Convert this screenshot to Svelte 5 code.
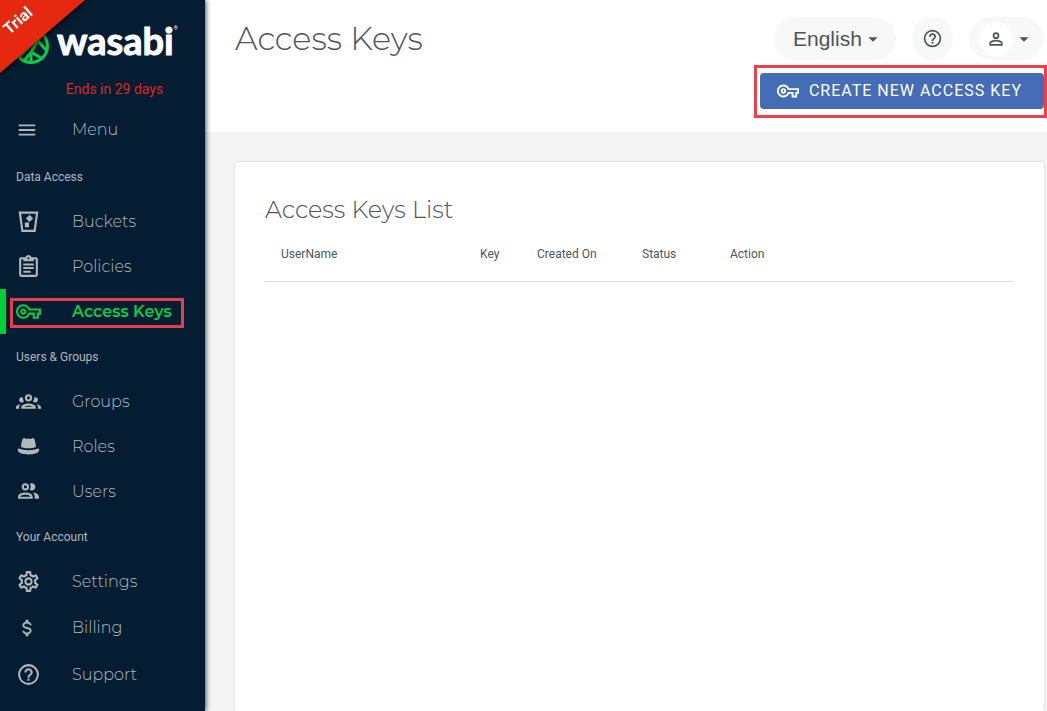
<script>
  const icons = {
    menu: "M3,6H21V8H3V6M3,11H21V13H3V11M3,16H21V18H3V16Z",
    bucket:
      "M2.5,2.5H21.5L18.8,22H5.2L2.5,2.5M4.9,4.5L7,20H17L19.1,4.5H4.9M13,5.5L16.5,9L13,12.5L9.5,9L13,5.5M8.5,13H12.5V17.5H8.5V13Z",
    clipboard:
      "M19,3H14.82C14.4,1.84 13.3,1 12,1C10.7,1 9.6,1.84 9.18,3H5A2,2 0 0,0 3,5V20A2,2 0 0,0 5,22H19A2,2 0 0,0 21,20V5A2,2 0 0,0 19,3M12,3A1,1 0 0,1 13,4A1,1 0 0,1 12,5A1,1 0 0,1 11,4A1,1 0 0,1 12,3M7,7H17V5H19V20H5V5H7V7M7,9H17V11H7V9M7,12.5H17V14.5H7V12.5M7,16H14V18H7V16Z",
    key: "M22 19H16V15H13.32C12.18 17.42 9.72 19 7 19C3.14 19 0 15.86 0 12S3.14 5 7 5C9.72 5 12.17 6.58 13.32 9H24V15H22V19M18 17H20V13H22V11H11.94L11.71 10.33C11 8.34 9.11 7 7 7C4.24 7 2 9.24 2 12S4.24 17 7 17C9.11 17 11 15.66 11.71 13.67L11.94 13H18V17M7 15C5.35 15 4 13.65 4 12S5.35 9 7 9 10 10.35 10 12 8.65 15 7 15M7 11C6.45 11 6 11.45 6 12S6.45 13 7 13 8 12.55 8 12 7.55 11 7 11Z",
    groups:
      "M12,5A3.5,3.5 0 0,0 8.5,8.5A3.5,3.5 0 0,0 12,12A3.5,3.5 0 0,0 15.5,8.5A3.5,3.5 0 0,0 12,5M12,7A1.5,1.5 0 0,1 13.5,8.5A1.5,1.5 0 0,1 12,10A1.5,1.5 0 0,1 10.5,8.5A1.5,1.5 0 0,1 12,7M5.5,8A2.5,2.5 0 0,0 3,10.5C3,11.44 3.53,12.25 4.29,12.68C4.65,12.88 5.06,13 5.5,13C5.94,13 6.35,12.88 6.71,12.68C7.08,12.47 7.39,12.17 7.62,11.81C6.89,10.86 6.5,9.7 6.5,8.5C6.5,8.41 6.5,8.31 6.5,8.22C6.2,8.08 5.86,8 5.5,8M18.5,8C18.14,8 17.8,8.08 17.5,8.22C17.5,8.31 17.5,8.41 17.5,8.5C17.5,9.7 17.11,10.86 16.38,11.81C16.5,12 16.63,12.15 16.78,12.3C16.94,12.45 17.1,12.58 17.29,12.68C17.65,12.88 18.06,13 18.5,13C18.94,13 19.35,12.88 19.71,12.68C20.47,12.25 21,11.44 21,10.5A2.5,2.5 0 0,0 18.5,8M12,14C9.66,14 5,15.17 5,17.5V19H19V17.5C19,15.17 14.34,14 12,14M4.71,14.55C2.78,14.78 0,15.76 0,17.5V19H3V17.07C3,16.06 3.69,15.22 4.71,14.55M19.29,14.55C20.31,15.22 21,16.06 21,17.07V19H24V17.5C24,15.76 21.22,14.78 19.29,14.55M12,16C13.53,16 15.24,16.5 16.23,17H7.77C8.76,16.5 10.47,16 12,16Z",
    hat: "M7.2,4C8.6,3.4 9.2,4.8 10,4.8C10.8,4.8 11.2,4.4 12,4.4C12.8,4.4 13.2,4.8 14,4.8C14.8,4.8 15.4,3.4 16.8,4C18.2,4.6 18.8,8.6 19.2,12.4C15.5,14 8.5,14 4.8,12.4C5.2,8.6 5.8,4.6 7.2,4M2.8,14C8,16.2 16,16.2 21.2,14C22.4,14 22.5,15.4 22,16.4C21,18.8 17,19.6 12,19.6C7,19.6 3,18.8 2,16.4C1.5,15.4 1.6,14 2.8,14Z",
    users:
      "M13.07 10.41A5 5 0 0 0 13.07 4.59A3.39 3.39 0 0 1 15 4A3.5 3.5 0 0 1 15 11A3.39 3.39 0 0 1 13.07 10.41M5.5 7.5A3.5 3.5 0 1 1 9 11A3.5 3.5 0 0 1 5.5 7.5M7.5 7.5A1.5 1.5 0 1 0 9 6A1.5 1.5 0 0 0 7.5 7.5M16 17V19H2V17S2 13 9 13 16 17 16 17M14 17C13.86 16.22 12.67 15 9 15S4.07 16.31 4 17M15.95 13A5.32 5.32 0 0 1 18 17V19H22V17S22 13.37 15.94 13Z",
    cog: "M12,8A4,4 0 0,1 16,12A4,4 0 0,1 12,16A4,4 0 0,1 8,12A4,4 0 0,1 12,8M12,10A2,2 0 0,0 10,12A2,2 0 0,0 12,14A2,2 0 0,0 14,12A2,2 0 0,0 12,10M10,22C9.75,22 9.54,21.82 9.5,21.58L9.13,18.93C8.5,18.68 7.96,18.34 7.44,17.94L4.95,18.95C4.73,19.03 4.46,18.95 4.34,18.73L2.34,15.27C2.21,15.05 2.27,14.78 2.46,14.63L4.57,12.97L4.5,12L4.57,11L2.46,9.37C2.27,9.22 2.21,8.95 2.34,8.73L4.34,5.27C4.46,5.05 4.73,4.96 4.95,5.05L7.44,6.05C7.96,5.66 8.5,5.32 9.13,5.07L9.5,2.42C9.54,2.18 9.75,2 10,2H14C14.25,2 14.46,2.18 14.5,2.42L14.87,5.07C15.5,5.32 16.04,5.66 16.56,6.05L19.05,5.05C19.27,4.96 19.54,5.05 19.66,5.27L21.66,8.73C21.79,8.95 21.73,9.22 21.54,9.37L19.43,11L19.5,12L19.43,13L21.54,14.63C21.73,14.78 21.79,15.05 21.66,15.27L19.66,18.73C19.54,18.95 19.27,19.04 19.05,18.95L16.56,17.95C16.04,18.34 15.5,18.68 14.87,18.93L14.5,21.58C14.46,21.82 14.25,22 14,22H10M11.25,4L10.88,6.61C9.68,6.86 8.62,7.5 7.85,8.39L5.44,7.35L4.69,8.65L6.8,10.2C6.4,11.37 6.4,12.64 6.8,13.8L4.68,15.36L5.43,16.66L7.86,15.62C8.63,16.5 9.68,17.14 10.87,17.38L11.24,20H12.76L13.13,17.39C14.32,17.14 15.37,16.5 16.14,15.62L18.57,16.66L19.32,15.36L17.2,13.81C17.6,12.64 17.6,11.37 17.2,10.2L19.31,8.65L18.56,7.35L16.15,8.39C15.38,7.5 14.32,6.86 13.12,6.62L12.75,4H11.25Z",
    dollar:
      "M7,15H9C9,16.08 10.37,17 12,17C13.63,17 15,16.08 15,15C15,13.9 13.96,13.5 11.76,12.97C9.64,12.44 7,11.78 7,9C7,7.21 8.47,5.69 10.5,5.18V3H13.5V5.18C15.53,5.69 17,7.21 17,9H15C15,7.92 13.63,7 12,7C10.37,7 9,7.92 9,9C9,10.1 10.04,10.5 12.24,11.03C14.36,11.56 17,12.22 17,15C17,16.79 15.53,18.31 13.5,18.82V21H10.5V18.82C8.47,18.31 7,16.79 7,15Z",
    help: "M11,18H13V16H11V18M12,2A10,10 0 0,0 2,12A10,10 0 0,0 12,22A10,10 0 0,0 22,12A10,10 0 0,0 12,2M12,20C7.59,20 4,16.41 4,12C4,7.59 7.59,4 12,4C16.41,4 20,7.59 20,12C20,16.41 16.41,20 12,20M12,6A4,4 0 0,0 8,10H10A2,2 0 0,1 12,8A2,2 0 0,1 14,10C14,12 11,11.75 11,15H13C13,12.75 16,12.5 16,10A4,4 0 0,0 12,6Z",
    account:
      "M12,4A4,4 0 0,1 16,8A4,4 0 0,1 12,12A4,4 0 0,1 8,8A4,4 0 0,1 12,4M12,6A2,2 0 0,0 10,8A2,2 0 0,0 12,10A2,2 0 0,0 14,8A2,2 0 0,0 12,6M12,13C14.67,13 20,14.33 20,17V20H4V17C4,14.33 9.33,13 12,13M12,14.9C9.03,14.9 5.9,16.36 5.9,17V18.1H18.1V17C18.1,16.36 14.97,14.9 12,14.9Z",
    caret: "M7,10L12,15L17,10H7Z",
  };

  const sections = [
    {
      title: "Data Access",
      items: [
        { label: "Buckets", icon: "bucket" },
        { label: "Policies", icon: "clipboard" },
        { label: "Access Keys", icon: "key", active: true },
      ],
    },
    {
      title: "Users & Groups",
      items: [
        { label: "Groups", icon: "groups" },
        { label: "Roles", icon: "hat" },
        { label: "Users", icon: "users" },
      ],
    },
    {
      title: "Your Account",
      items: [
        { label: "Settings", icon: "cog" },
        { label: "Billing", icon: "dollar", small: true, tall: true },
        { label: "Support", icon: "help", tall: true },
      ],
    },
  ];

  const columns = ["UserName", "Key", "Created On", "Status", "Action"];

  let language = "English";
</script>

{#snippet icon(name, size)}
  <svg class="icon" width={size} height={size} viewBox="0 0 24 24" aria-hidden="true">
    <path d={icons[name]} fill="currentColor" fill-rule="evenodd" />
  </svg>
{/snippet}

<div class="layout">
  <aside class="sidebar">
    <div class="brand">
      <svg class="mark" width="38" height="38" viewBox="0 0 38 38" aria-hidden="true">
        <g fill="none" stroke="#0fc944" stroke-width="3">
          <circle cx="19" cy="19" r="16.5" />
          <path d="M7 30L30 7M12 34L19 25L29 31M19 25L30 7M26 14L35 24M19 25V35" />
        </g>
      </svg>
      <span class="wordmark">wasabi</span><span class="reg">®</span>
    </div>
    <div class="ribbon"><span>Trial</span></div>
    <p class="ends">Ends in 29 days</p>

    <button class="row menu" type="button">
      <span class="slot">{@render icon("menu", 22)}</span>
      <span>Menu</span>
    </button>

    <nav>
      {#each sections as section}
        <h2>{section.title}</h2>
        {#each section.items as item}
          <a href="#{item.icon}" class="row" class:active={item.active} class:tall={item.tall}>
            <span class="slot">{@render icon(item.icon, item.small ? 22 : 25)}</span>
            <span>{item.label}</span>
          </a>
        {/each}
      {/each}
    </nav>
  </aside>

  <main>
    <header>
      <div class="top">
        <h1>Access Keys</h1>
        <div class="tools">
          <div class="pill language">
            <select aria-label="Language" bind:value={language}>
              <option>English</option>
            </select>
            {@render icon("caret", 22)}
          </div>
          <button class="pill help" type="button" aria-label="Help">
            {@render icon("help", 21)}
          </button>
          <button class="pill account" type="button" aria-label="Account">
            <span class="avatar">{@render icon("account", 20)}</span>
            {@render icon("caret", 22)}
          </button>
        </div>
      </div>
      <div class="highlight">
        <button class="create" type="button">
          {@render icon("key", 22)}
          <span>CREATE NEW ACCESS KEY</span>
        </button>
      </div>
    </header>

    <section class="card">
      <h2>Access Keys List</h2>
      <table>
        <thead>
          <tr>
            {#each columns as column}
              <th scope="col">{column}</th>
            {/each}
          </tr>
        </thead>
        <tbody></tbody>
      </table>
    </section>
  </main>
</div>

<style>
  :global(body) {
    margin: 0;
    overflow: hidden;
  }
  * {
    box-sizing: border-box;
  }
  h1,
  h2,
  p {
    margin: 0;
    font-weight: 400;
  }
  button,
  select {
    font: inherit;
    color: inherit;
    border: 0;
    margin: 0;
    padding: 0;
    background: none;
    cursor: pointer;
  }
  .icon {
    display: block;
    flex: none;
  }

  .layout {
    display: flex;
    height: 100vh;
    font-family: Roboto, sans-serif;
    color: #4d5559;
    background: #f4f4f4;
  }

  /* sidebar */
  .sidebar {
    position: relative;
    z-index: 1;
    flex: none;
    width: 205px;
    background: #051d33;
    color: #b0b8bd;
    box-shadow: 1px 0 5px rgba(0, 0, 0, 0.7);
  }
  .brand {
    display: flex;
    align-items: center;
    height: 79px;
    padding-left: 12px;
    padding-top: 12px;
  }
  .wordmark {
    margin-left: 7px;
    padding-bottom: 12px;
    font-family: Lato, sans-serif;
    font-size: 38px;
    font-weight: 700;
    line-height: 44px;
    color: #fff;
    -webkit-text-stroke: 1px #fff;
  }
  .reg {
    align-self: flex-start;
    padding-top: 13px;
    font-size: 5px;
    color: #fff;
  }
  .ribbon {
    position: absolute;
    top: 0;
    left: 0;
    width: 90px;
    height: 80px;
    filter: drop-shadow(0 1px 3px #000);
  }
  .ribbon::before {
    content: "";
    position: absolute;
    inset: 0 5px 7px 0;
    background: #e5280f;
    clip-path: polygon(0 0, 100% 0, 0 100%);
  }
  .ribbon span {
    position: absolute;
    top: 11px;
    left: 2px;
    font-size: 16px;
    font-weight: 700;
    line-height: 20px;
    color: #fff;
    transform: rotate(-41deg);
  }
  .ends {
    padding-left: 24px;
    font-size: 14px;
    line-height: 20px;
    text-align: center;
    color: #d9291f;
  }
  .row {
    position: relative;
    display: flex;
    align-items: center;
    width: 100%;
    height: 45px;
    padding-left: 16px;
    font-family: Montserrat, Inter, sans-serif;
    font-size: 16px;
    font-weight: 300;
    text-align: left;
    text-decoration: none;
    color: inherit;
  }
  .row.menu {
    margin-top: 8px;
  }
  .row.tall {
    height: 47px;
  }
  .slot {
    width: 56px;
  }
  .row.active {
    font-weight: 600;
    color: #0fc944;
    border-left: 6px solid #00d036;
    padding-left: 10px;
  }
  .row.active::after {
    content: "";
    position: absolute;
    inset: 9px 21px 6px 4px;
    border: 3px solid #e5404a;
  }
  nav {
    padding-top: 2px;
  }
  nav h2 {
    padding-top: 2px;
    padding-left: 16px;
    font-size: 12px;
    line-height: 43px;
  }

  /* content */
  main {
    display: flex;
    flex-direction: column;
    flex: 1;
    min-width: 0;
  }
  header {
    height: 132px;
    padding-top: 17px;
    background: #fff;
  }
  .top {
    display: flex;
    justify-content: space-between;
    padding: 0 3px 0 30px;
  }
  h1 {
    font-family: Montserrat, Inter, sans-serif;
    font-size: 32px;
    font-weight: 300;
    line-height: 44px;
  }
  .tools {
    display: flex;
    gap: 16px;
  }
  .pill {
    display: flex;
    align-items: center;
    justify-content: center;
    height: 43px;
    border-radius: 22px;
    background: #f8f8f8;
  }
  .language {
    position: relative;
    width: 122px;
    font-family: "Liberation Sans", Arial, sans-serif;
    font-size: 21px;
  }
  .language select {
    appearance: none;
    width: 100%;
    height: 100%;
    padding-left: 19px;
  }
  .language .icon {
    position: absolute;
    right: 12px;
    pointer-events: none;
  }
  .help {
    width: 41px;
  }
  .account {
    width: 75px;
  }
  .avatar {
    display: flex;
    align-items: center;
    justify-content: center;
    width: 34px;
    height: 34px;
    border-radius: 50%;
    background: #fff;
  }
  .highlight {
    width: fit-content;
    margin: 4px 0 0 auto;
    padding: 5px 0 6px 3px;
    border: 3px solid #ee4048;
  }
  .create {
    display: flex;
    align-items: center;
    gap: 10px;
    height: 36px;
    padding: 0 22px 0 17px;
    border-radius: 4px;
    background: #456db5;
    color: #fff;
    font-size: 16px;
    letter-spacing: 1px;
  }
  .create span {
    padding-bottom: 2px;
  }

  .card {
    flex: 1;
    margin: 30px 3px 0 30px;
    padding: 30px 30px 0;
    background: #fff;
    border-radius: 2px;
    box-shadow: 0 0 2px rgba(0, 0, 0, 0.2);
  }
  .card h2 {
    font-family: Montserrat, Inter, sans-serif;
    font-size: 24px;
    font-weight: 300;
    line-height: 36px;
  }
  table {
    width: 100%;
    table-layout: fixed;
    border-collapse: collapse;
  }
  th {
    height: 53px;
    padding: 0 16px;
    border-bottom: 1px solid #dcdcdc;
    font-size: 12px;
    font-weight: 400;
    text-align: left;
    white-space: nowrap;
  }
  th:nth-child(1) {
    width: 199px;
  }
  th:nth-child(2) {
    width: 57px;
  }
  th:nth-child(3) {
    width: 105px;
  }
  th:nth-child(4) {
    width: 88px;
  }
</style>
